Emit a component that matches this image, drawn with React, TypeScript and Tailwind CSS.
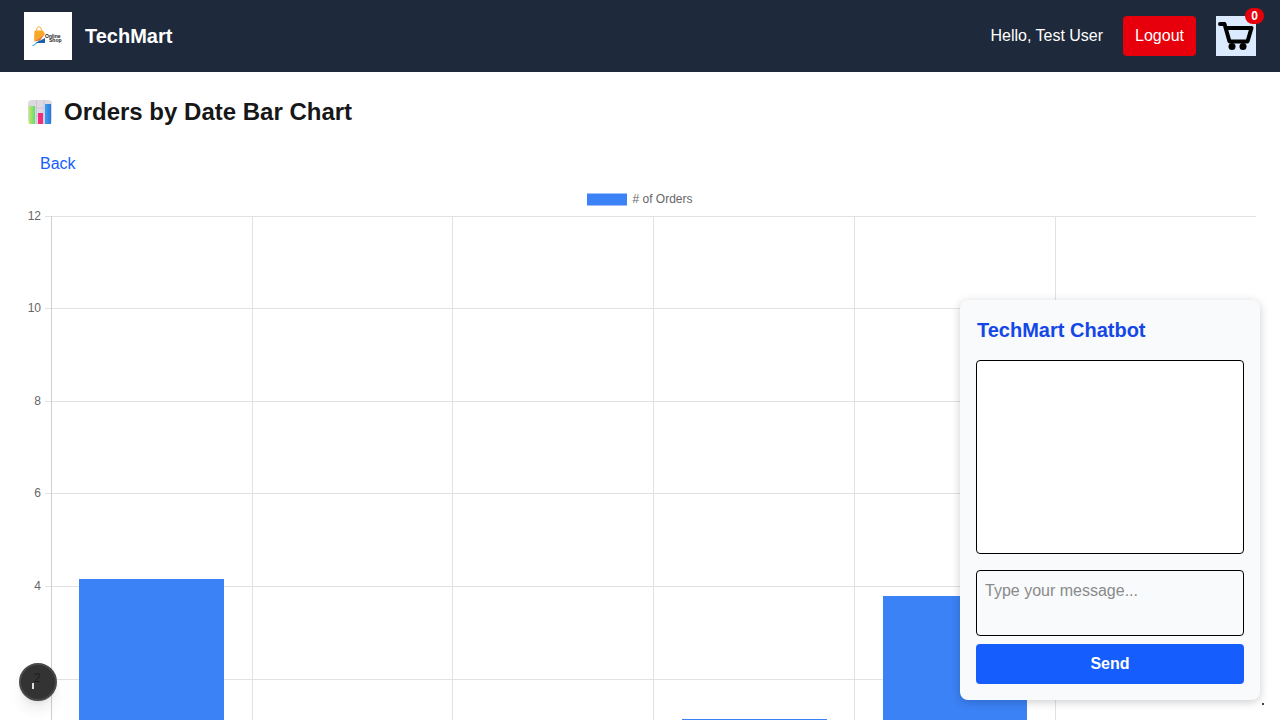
const sans = "font-['Liberation_Sans',Arial,sans-serif]";

const gridX = [51.5, 252.5, 452.5, 653.5, 854.5, 1055.5];
const ticks = [
  { label: "12", y: 216.5 },
  { label: "10", y: 308.5 },
  { label: "8", y: 401.5 },
  { label: "6", y: 493.5 },
  { label: "4", y: 586.5 },
  { label: "2", y: 679.5 },
];
const bars = [
  { x: 79, w: 145, y: 579 },
  { x: 682, w: 145, y: 719 },
  { x: 883, w: 144, y: 596 },
];

function Logo() {
  return (
    <div className="h-12 w-12 bg-white">
      <svg viewBox="0 0 48 48" className="h-12 w-12">
        <path d="M10.500 18.500h8.500l2 3.500-11 7z" fill="#f9a825" />
        <path d="M12.500 18.500c0-5 5-5 5 0" fill="none" stroke="#f9a825" strokeWidth="1" />
        <path d="M9.500 29.500l11.500-7.500-5 6.500z" fill="#f4791f" />
        <path d="M8 34l9.500-7.500-3 3.500-5 4z" fill="#1da6dc" />
        <path d="M11.500 31l9.500-5v5z" fill="#1b5fa8" />
        <text x="21" y="25.500" fontSize="5" fontWeight="700" fill="#222" fontFamily="'Liberation Sans', sans-serif">
          Online
        </text>
        <text x="25" y="30" fontSize="5" fontWeight="700" fill="#222" fontFamily="'Liberation Sans', sans-serif">
          Shop
        </text>
      </svg>
    </div>
  );
}

function CartIcon() {
  return (
    <svg viewBox="0 0 40 40" className="h-10 w-10">
      <path
        d="M4 8h4.500l5 17.500h18l4-13.500H10"
        fill="none"
        stroke="#000"
        strokeWidth="4"
        strokeLinecap="round"
        strokeLinejoin="round"
      />
      <circle cx="16" cy="30.500" r="3.500" fill="#000" />
      <circle cx="27" cy="30.500" r="3.500" fill="#000" />
    </svg>
  );
}

function ChartEmoji() {
  return (
    <svg viewBox="0 0 24 24" className="h-6 w-6 shrink-0">
      <defs>
        <linearGradient id="greenBar" x1="0" x2="1" y1="0" y2="0">
          <stop offset="0" stopColor="#c4e85a" />
          <stop offset="1" stopColor="#5fdc7c" />
        </linearGradient>
        <linearGradient id="blueBar" x1="0" x2="1" y1="0" y2="0">
          <stop offset="0" stopColor="#3aa0f0" />
          <stop offset="1" stopColor="#2a78e0" />
        </linearGradient>
      </defs>
      <rect x="0" y="0" width="24" height="24" rx="4" fill="#ddd8e2" />
      <path d="M8.500 0v24M16 0v24M0 8h24M0 16h24" stroke="#c9c4d0" strokeWidth="0.800" />
      <rect x="1" y="6" width="6" height="18" fill="url(#greenBar)" />
      <rect x="10" y="13" width="5" height="11" fill="#ee2f7c" />
      <rect x="17" y="4" width="6" height="20" fill="url(#blueBar)" />
    </svg>
  );
}

function BarChart() {
  return (
    <svg viewBox="0 0 1280 540" className="block h-[540px] w-[1280px]" fontFamily="'Liberation Sans', Arial, sans-serif">
      <g transform="translate(0 -180)">
        <rect x="587" y="193.500" width="40" height="12" fill="#3b82f6" />
        <text x="632.500" y="203" fontSize="12" fill="#666">
          # of Orders
        </text>
        {ticks.map((t) => (
          <g key={t.label}>
            <line x1="45" x2="1256" y1={t.y} y2={t.y} stroke="#e2e2e2" />
            <text x="41" y={t.y + 3.500} textAnchor="end" fontSize="12" fill="#666">
              {t.label}
            </text>
          </g>
        ))}
        {gridX.map((x) => (
          <line key={x} x1={x} x2={x} y1="216" y2="720" stroke={x === 51.5 ? "#cfcfcf" : "#e2e2e2"} />
        ))}
        {bars.map((b) => (
          <rect key={b.x} x={b.x} y={b.y} width={b.w} height={720 - b.y} fill="#3b82f6" />
        ))}
      </g>
    </svg>
  );
}

export default function App() {
  return (
    <div className={`relative h-screen overflow-hidden bg-white ${sans}`}>
      <nav className="flex h-[72px] items-center justify-between bg-[#1e293b] px-6 text-white">
        <div className="flex items-center gap-[13px]">
          <Logo />
          <span className="text-xl font-bold">TechMart</span>
        </div>
        <div className="flex items-center">
          <span className="mr-5 text-base">Hello, Test User</span>
          <button className="mr-5 h-10 rounded bg-[#e7000b] px-3 text-base text-white">Logout</button>
          <div className="relative h-10 w-10 bg-[#dbeafe]">
            <CartIcon />
            <span className="absolute -right-2 -top-2 flex h-4 w-[19px] items-center justify-center rounded-full bg-[#e7000b] text-xs font-bold text-white">
              0
            </span>
          </div>
        </div>
      </nav>

      <main>
        <h1 className="flex items-center gap-3 px-7 pb-6 pt-6 text-2xl font-bold leading-8 text-[#171717]">
          <ChartEmoji />
          Orders by Date Bar Chart
        </h1>
        <a className="ml-10 block text-base leading-6 text-[#155dfc]">Back</a>
        <div className="mt-1">
          <BarChart />
        </div>
      </main>

      <div className="absolute bottom-5 right-5 flex h-[400px] w-[300px] flex-col rounded-lg bg-[#f8fafc] px-4 pb-4 pt-[14px] shadow-[0_2px_10px_rgba(0,0,0,0.2)]">
        <h2 className="mb-[14px] pl-px text-xl font-bold leading-8 text-[#1447e6]">TechMart Chatbot</h2>
        <div className="h-[194px] shrink-0 rounded border border-black bg-white" />
        <textarea
          placeholder="Type your message..."
          className="mt-4 h-[66px] shrink-0 resize-none rounded border border-black bg-[#f8fafc] px-2 py-2 text-base leading-6 placeholder:text-[#8a8a8a]"
        />
        <button className="mt-2 h-10 shrink-0 rounded bg-[#155dfc] text-base font-bold text-white">Send</button>
      </div>

      <div className="absolute left-[19px] top-[663px] h-[38px] w-[38px] rounded-full border-2 border-[#4a4a4a] bg-[#333] shadow-lg">
        <span className="absolute left-[13px] top-[5px] text-xs leading-4 text-[#1c1c1c]">2</span>
        <span className="absolute left-[11px] top-[18px] h-[6px] w-[2px] bg-[#ddd]" />
      </div>
      <span className="absolute left-[1262px] top-[703px] h-[2px] w-[2px] bg-[#444]" />
    </div>
  );
}
